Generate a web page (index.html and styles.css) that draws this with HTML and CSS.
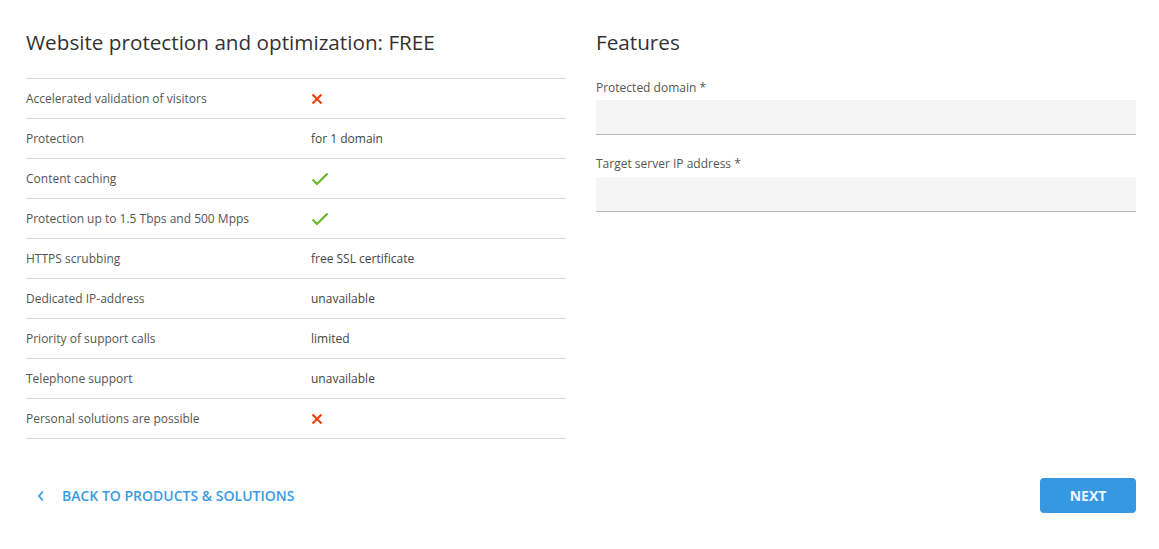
FILE: index.html
```html
<!DOCTYPE html>
<html lang="en">
<head>
<meta charset="utf-8">
<title>Website protection and optimization</title>
<link rel="stylesheet" href="styles.css">
</head>
<body>
<div class="page">
  <div class="columns">
    <section class="plan">
      <h2 class="title">Website protection and optimization: FREE</h2>
      <div class="table">
        <div class="row"><span class="label">Accelerated validation of visitors</span><span class="value"><svg class="icon-x" viewBox="0 0 12 12"><path d="M1.5 1.5L10.5 10.5M10.5 1.5L1.5 10.5"/></svg></span></div>
        <div class="row"><span class="label">Protection</span><span class="value">for 1 domain</span></div>
        <div class="row"><span class="label">Content caching</span><span class="value"><svg class="icon-check" viewBox="0 0 18 14"><path d="M1.5 7.5L6 12L16.5 1.5"/></svg></span></div>
        <div class="row"><span class="label">Protection up to 1.5 Tbps and 500 Mpps</span><span class="value"><svg class="icon-check" viewBox="0 0 18 14"><path d="M1.5 7.5L6 12L16.5 1.5"/></svg></span></div>
        <div class="row"><span class="label">HTTPS scrubbing</span><span class="value">free SSL certificate</span></div>
        <div class="row"><span class="label">Dedicated IP-address</span><span class="value">unavailable</span></div>
        <div class="row"><span class="label">Priority of support calls</span><span class="value">limited</span></div>
        <div class="row"><span class="label">Telephone support</span><span class="value">unavailable</span></div>
        <div class="row"><span class="label">Personal solutions are possible</span><span class="value"><svg class="icon-x" viewBox="0 0 12 12"><path d="M1.5 1.5L10.5 10.5M10.5 1.5L1.5 10.5"/></svg></span></div>
      </div>
    </section>
    <section class="features">
      <h2 class="title">Features</h2>
      <label class="field">
        <span class="field-label">Protected domain *</span>
        <input class="field-input" type="text">
      </label>
      <label class="field">
        <span class="field-label">Target server IP address *</span>
        <input class="field-input" type="text">
      </label>
    </section>
  </div>
  <div class="footer">
    <a class="back" href="#"><svg class="chev" viewBox="0 0 8 12"><path d="M6 1.5L2 6L6 10.5"/></svg><span>BACK TO PRODUCTS &amp; SOLUTIONS</span></a>
    <button class="next" type="button">NEXT</button>
  </div>
</div>
</body>
</html>
```
FILE: styles.css
```css
* { box-sizing: border-box; }
html, body { margin: 0; padding: 0; background: #fff; }
body {
  font-family: "Open Sans", "Liberation Sans", sans-serif;
  color: #555;
}
.page {
  width: 1136px;
  padding: 27px 0 0 26px;
}
.columns {
  display: grid;
  grid-template-columns: 540px 540px;
  column-gap: 30px;
}
.title {
  margin: 0 0 21px;
  font-size: 20.7px;
  line-height: 30px;
  font-weight: 400;
  color: #333;
}
.table { border-top: 1px solid #d9d9d9; }
.row {
  display: flex;
  align-items: center;
  height: 40px;
  border-bottom: 1px solid #d9d9d9;
  font-size: 12px;
  color: #555;
}
.label { width: 285px; flex: none; }
.value { display: flex; align-items: center; color: #444; }
.icon-x { width: 12px; height: 12px; margin-top: 1px; }
.icon-x path { fill: none; stroke: #f1420f; stroke-width: 2.2; stroke-linecap: butt; }
.icon-check { width: 18px; height: 14px; }
.icon-check path { fill: none; stroke: #6bb52a; stroke-width: 2.2; }
.features .title { margin-bottom: 22px; }
.field { display: block; margin-bottom: 20px; }
.field-label {
  display: block;
  font-size: 12px;
  line-height: 18px;
  color: #555;
  margin-bottom: 3px;
}
.field + .field .field-label { margin-bottom: 4px; }
.field-input {
  display: block;
  width: 100%;
  height: 35px;
  border: 0;
  border-bottom: 1px solid #b9b9b9;
  background: #f5f5f5;
  outline: none;
  font: inherit;
}
.footer {
  display: flex;
  justify-content: space-between;
  align-items: center;
  margin-top: 39px;
}
.back {
  display: flex;
  align-items: center;
  gap: 17px;
  padding-left: 11px;
  color: #3a9be2;
  text-decoration: none;
  font-size: 14px;
  font-weight: 600;
}
.chev { width: 8px; height: 12px; }
.chev path { fill: none; stroke: #3a9be2; stroke-width: 1.8; }
.next {
  width: 96px;
  height: 35px;
  border: 0;
  border-radius: 4px;
  background: #3598e1;
  color: #eef6fd;
  font-family: inherit;
  font-size: 14px;
  font-weight: 700;
}
```
